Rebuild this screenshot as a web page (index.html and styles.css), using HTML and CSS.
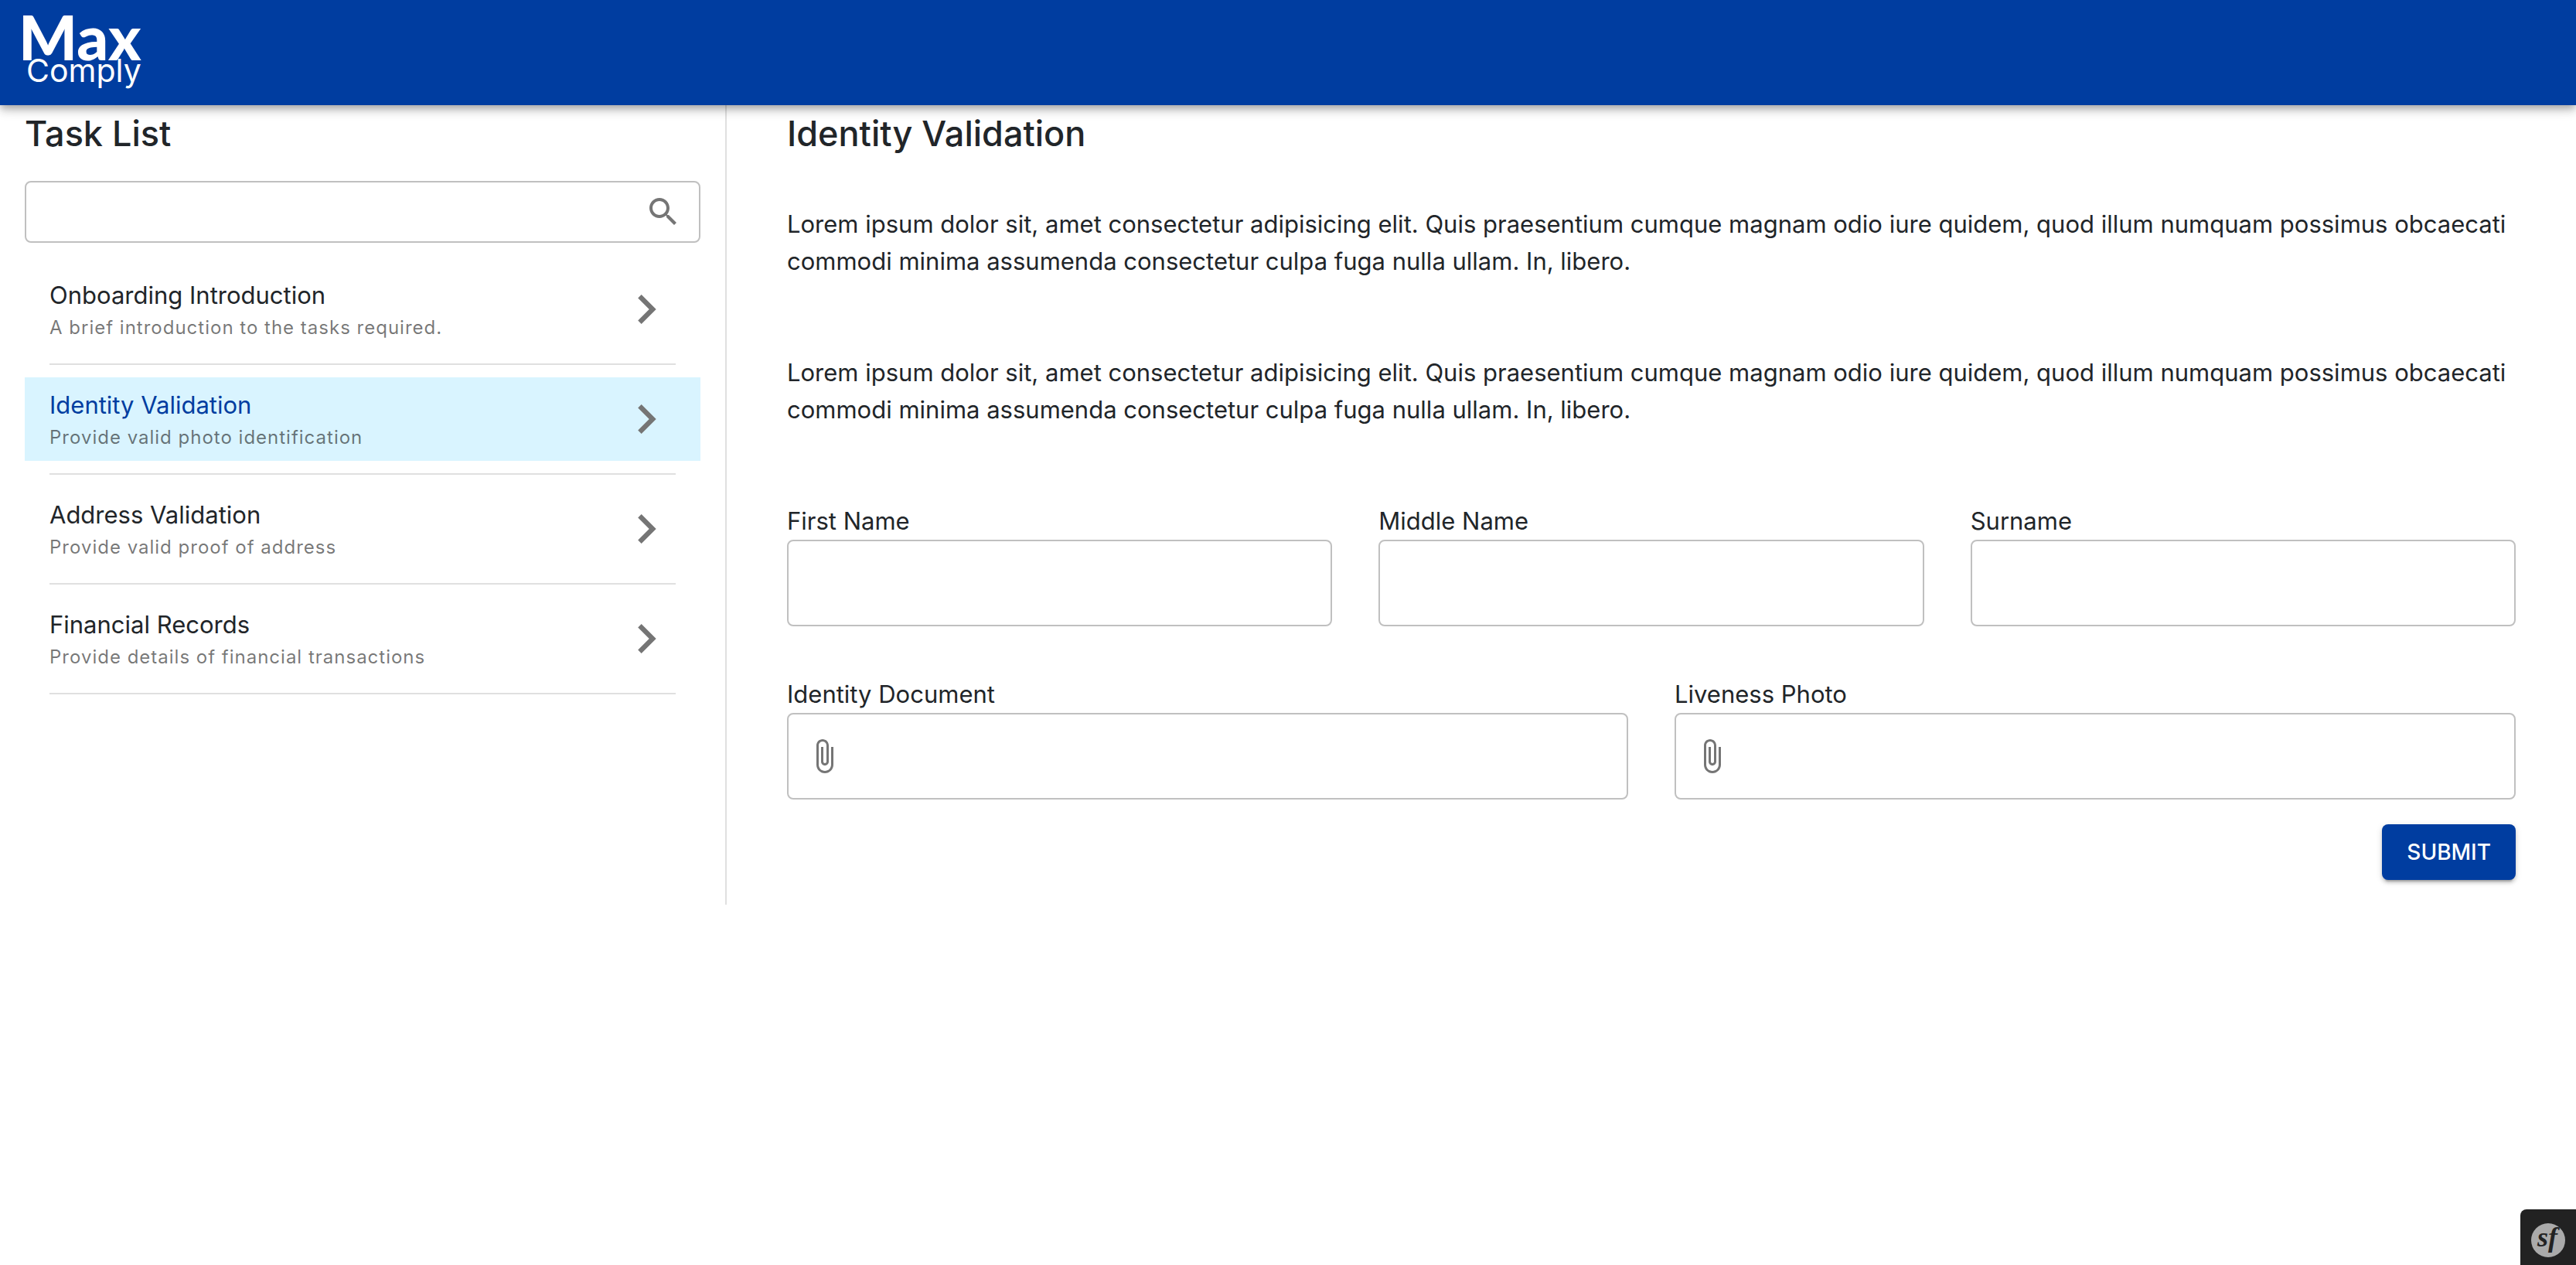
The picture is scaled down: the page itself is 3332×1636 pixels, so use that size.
FILE: index.html
```html
<!DOCTYPE html>
<html lang="en">
<head>
<meta charset="utf-8">
<title>Max Comply - Identity Validation</title>
<link rel="stylesheet" href="styles.css">
</head>
<body>
<svg class="sprite" aria-hidden="true">
  <symbol id="chevron" viewBox="0 0 24 24"><path d="M10 6 8.59 7.41 13.17 12l-4.58 4.59L10 18l6-6z"/></symbol>
  <symbol id="clip" viewBox="0 0 24 24"><path d="M16.5 6v11.5c0 2.21-1.79 4-4 4s-4-1.79-4-4V5c0-1.38 1.12-2.5 2.5-2.5s2.5 1.12 2.5 2.5v10.5c0 .55-.45 1-1 1s-1-.45-1-1V6H10v9.5c0 1.38 1.12 2.5 2.5 2.5s2.5-1.12 2.5-2.5V5c0-2.21-1.79-4-4-4S7 2.79 7 5v12.5c0 3.04 2.46 5.5 5.5 5.5s5.5-2.46 5.5-5.5V6h-1.5z"/></symbol>
</svg>
<header class="app-bar">
  <a class="logo" href="#"><span class="logo-top">Max</span><span class="logo-bottom">Comply</span></a>
</header>
<div class="layout">
  <aside class="sidebar">
    <h2 class="title">Task List</h2>
    <div class="box search">
      <input class="box-input" type="search" aria-label="Search tasks">
      <svg class="icon" viewBox="0 0 24 24" aria-hidden="true"><path d="M15.5 14h-.79l-.28-.27C15.41 12.59 16 11.11 16 9.5 16 5.91 13.09 3 9.5 3S3 5.91 3 9.5 5.91 16 9.5 16c1.61 0 3.09-.59 4.23-1.57l.27.28v.79l5 4.99L20.49 19l-4.99-5zm-6 0C7.01 14 5 11.99 5 9.5S7.01 5 9.5 5 14 7.01 14 9.5 11.99 14 9.5 14z"/></svg>
    </div>
    <ul class="tasks">
      <li>
        <a class="task" href="#"><span class="task-text"><span class="task-name">Onboarding Introduction</span><span class="task-note">A brief introduction to the tasks required.</span></span><svg class="chevron" aria-hidden="true"><use href="#chevron"/></svg></a>
        <hr class="divider">
      </li>
      <li>
        <a class="task task-active" href="#" aria-current="page"><span class="task-text"><span class="task-name">Identity Validation</span><span class="task-note">Provide valid photo identification</span></span><svg class="chevron" aria-hidden="true"><use href="#chevron"/></svg></a>
        <hr class="divider">
      </li>
      <li>
        <a class="task" href="#"><span class="task-text"><span class="task-name">Address Validation</span><span class="task-note">Provide valid proof of address</span></span><svg class="chevron" aria-hidden="true"><use href="#chevron"/></svg></a>
        <hr class="divider">
      </li>
      <li>
        <a class="task" href="#"><span class="task-text"><span class="task-name">Financial Records</span><span class="task-note">Provide details of financial transactions</span></span><svg class="chevron" aria-hidden="true"><use href="#chevron"/></svg></a>
        <hr class="divider">
      </li>
    </ul>
  </aside>
  <main class="content">
    <h2 class="title">Identity Validation</h2>
    <p class="copy">Lorem ipsum dolor sit, amet consectetur adipisicing elit. Quis praesentium cumque magnam odio iure quidem, quod illum numquam possimus obcaecati commodi minima assumenda consectetur culpa fuga nulla ullam. In, libero.</p>
    <p class="copy">Lorem ipsum dolor sit, amet consectetur adipisicing elit. Quis praesentium cumque magnam odio iure quidem, quod illum numquam possimus obcaecati commodi minima assumenda consectetur culpa fuga nulla ullam. In, libero.</p>
    <form class="form">
      <div class="row">
        <div class="field"><label for="first">First Name</label><div class="box"><input class="box-input" id="first" type="text"></div></div>
        <div class="field"><label for="middle">Middle Name</label><div class="box"><input class="box-input" id="middle" type="text"></div></div>
        <div class="field"><label for="surname">Surname</label><div class="box"><input class="box-input" id="surname" type="text"></div></div>
      </div>
      <div class="row">
        <div class="field"><label for="document">Identity Document</label><div class="box"><svg class="icon" aria-hidden="true"><use href="#clip"/></svg><input class="box-input box-file" id="document" type="file"></div></div>
        <div class="field"><label for="photo">Liveness Photo</label><div class="box"><svg class="icon" aria-hidden="true"><use href="#clip"/></svg><input class="box-input box-file" id="photo" type="file"></div></div>
      </div>
      <button class="submit" type="submit">SUBMIT</button>
    </form>
  </main>
</div>
<button class="toolbar" type="button" aria-label="Show Symfony toolbar">
  <svg class="toolbar-icon" viewBox="0 0 48 48" aria-hidden="true"><circle cx="24" cy="24" r="22"/><text x="23" y="32" text-anchor="middle">sf</text></svg>
</button>
</body>
</html>
```

FILE: styles.css
```css
* { box-sizing: border-box; }

body {
  margin: 0;
  background: #fff;
  color: #212529;
  font-family: Inter, "Liberation Sans", sans-serif;
  font-size: 31px;
  line-height: 48px;
}

.sprite { display: none; }

.app-bar {
  position: relative;
  display: flex;
  height: 136px;
  padding: 18px 24px;
  background: #003da0;
  box-shadow: 0 4px 8px -2px rgba(0, 0, 0, .2), 0 8px 10px rgba(0, 0, 0, .14), 0 2px 20px rgba(0, 0, 0, .12);
}

.logo {
  display: flex;
  flex-direction: column;
  align-items: flex-end;
  color: #fff;
  text-decoration: none;
}
.logo-top { font-family: Lato, sans-serif; font-size: 80px; font-weight: 900; line-height: 58px; }
.logo-bottom { font-size: 41px; line-height: 30px; }

.layout {
  display: grid;
  grid-template-columns: 235fr 598fr;
}

.sidebar {
  padding: 8px 32px 32px;
  border-right: 2px solid rgba(0, 0, 0, .12);
}

.title {
  margin: 0 0 32px;
  font-size: 45px;
  font-weight: 500;
  line-height: 58px;
}

.box {
  display: flex;
  align-items: center;
  height: 112px;
  padding: 0 22px;
  border: 2px solid #c0c0c0;
  border-radius: 8px;
}
.box:focus-within { border-color: #003da0; }
.box-input {
  flex: 1;
  min-width: 0;
  padding: 0;
  border: 0;
  outline: 0;
  background: none;
  color: inherit;
  font: inherit;
}
.box-file { opacity: 0; }
.search { height: 80px; }

.icon { width: 48px; height: 48px; fill: #757575; }
.chevron { width: 76px; height: 76px; fill: #757575; }

.tasks {
  display: grid;
  gap: 16px;
  margin: 32px 0 0;
  padding: 0;
  list-style: none;
}
.task {
  display: flex;
  align-items: center;
  justify-content: space-between;
  height: 108px;
  padding: 0 32px;
  color: inherit;
  text-decoration: none;
}
.task-active { background: #d9f4ff; }
.task-name, .task-note { display: block; }
.task-active .task-name { color: #003da0; }
.task-note {
  color: rgba(0, 0, 0, .54);
  font-size: 24px;
  letter-spacing: 1px;
  line-height: 36px;
}
.divider {
  height: 2px;
  margin: 16px 32px 0;
  border: 0;
  background: rgba(0, 0, 0, .12);
}

.content { padding: 8px 78px 32px; }
.copy { margin: 64px 0 96px; }

.form { display: grid; gap: 64px; }
.row {
  display: grid;
  grid-auto-columns: minmax(0, 1fr);
  grid-auto-flow: column;
  gap: 60px;
}
.field label { display: block; }

.submit {
  justify-self: end;
  height: 72px;
  margin-top: -32px;
  padding: 0 32px;
  border: 0;
  border-radius: 8px;
  background: #003da0;
  color: #fff;
  font: inherit;
  font-size: 28px;
  font-weight: 500;
  box-shadow: 0 6px 2px -4px rgba(0, 0, 0, .2), 0 4px 4px rgba(0, 0, 0, .14), 0 2px 10px rgba(0, 0, 0, .12);
}

.toolbar {
  position: fixed;
  right: 0;
  bottom: 0;
  width: 72px;
  height: 72px;
  padding: 16px 12px 8px;
  border: 0;
  border-radius: 8px 0 0;
  background: #222;
}
.toolbar-icon { display: block; width: 48px; height: 48px; }
.toolbar-icon circle { fill: #aaa; }
.toolbar-icon text {
  fill: #222;
  font-family: "Liberation Serif", serif;
  font-size: 36px;
  font-style: italic;
  font-weight: 700;
}
```
